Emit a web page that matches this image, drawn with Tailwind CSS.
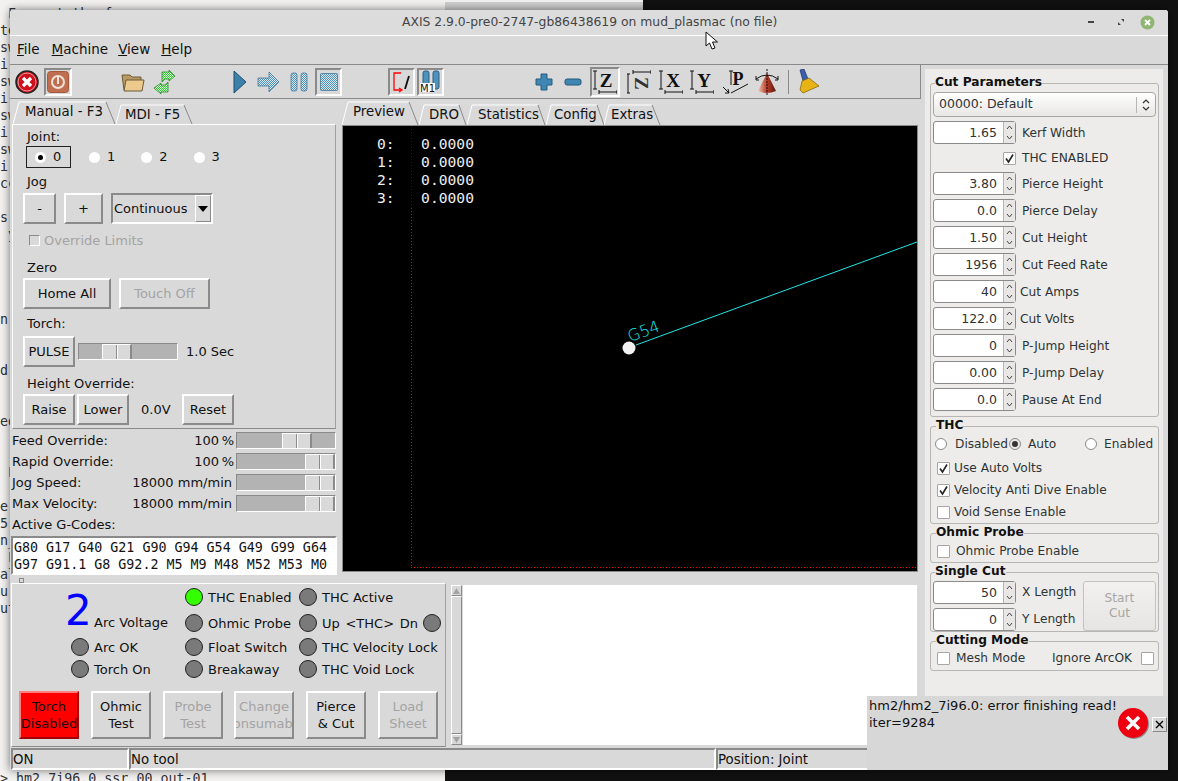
<!DOCTYPE html>
<html lang="en">
<head>
<meta charset="UTF-8">
<title>AXIS</title>
<script src="https://cdn.jsdelivr.net/npm/@tailwindcss/browser@4"></script>
</head>
<body class="bg-[#111111] overflow-hidden font-['DejaVu_Sans',sans-serif] text-[13px] text-[#111111]">
<div class="relative w-[1178px] h-[781px] overflow-hidden">

  <!-- desktop behind the window -->
  <div class="absolute left-0 top-0 w-[643px] h-[10px] bg-[#cfcfcf] border-t-2 border-[#f0f0f0]"></div>
  <pre class="absolute left-0 top-0 w-[445px] h-[781px] pt-[5px] bg-[#f3f2f1] font-['DejaVu_Sans_Mono',monospace] text-[13.33px] leading-[17px] text-[#333333]"> F     t the f
te
sw
ir
sw
ir
sw
ir
sw
ir
cc

s
 y




n


d

 '
ed

 '
 F

er
5
n_
 F
al
ur
ut









> hm2_7i96.0.ssr.00.out-01</pre>

  <!-- AXIS window -->
  <div class="absolute left-[10px] top-[10px] w-[1158px] h-[760px] flex flex-col bg-[#d9d9d9] rounded-t-[3px] shadow-[0_0_10px_rgba(0,0,0,0.55)]">

    <!-- title bar -->
    <div class="relative h-[26px] shrink-0 bg-[#dcdcdc] border-b border-white rounded-t-[3px] flex items-center pl-[392px] text-[#444444] text-[12.35px] font-medium">
      AXIS 2.9.0-pre0-2747-gb86438619 on mud_plasmac (no file)
      <div class="absolute left-[1078px] top-[11px] w-[6px] h-[2px] bg-[#444444]"></div>
      <svg class="absolute left-[1107px] top-[8px]" width="8" height="8" viewBox="0 0 8 8"><path d="M1 7V4L4 7ZM7 1V4L4 1Z" fill="#444444"/></svg>
      <svg class="absolute left-[1130px] top-[5px]" width="15" height="15" viewBox="0 0 15 15"><circle cx="7.5" cy="7.5" r="7" fill="#8fb573"/><path d="M5 5L10 10M10 5L5 10" stroke="white" stroke-width="1.8"/></svg>
    </div>

    <!-- menu -->
    <div class="h-[29px] shrink-0 border-b border-[#8a8a8a] flex items-center pl-[7px] pb-[2px] text-[13.5px]">
      <span><span class="underline">F</span>ile</span>
      <span class="ml-[12px]"><span class="underline">M</span>achine</span>
      <span class="ml-[10px]"><span class="underline">V</span>iew</span>
      <span class="ml-[11px]"><span class="underline">H</span>elp</span>
    </div>

    <div class="flex flex-1 min-h-0">
      <!-- everything left of the cut parameters -->
      <div class="w-[911px] shrink-0 flex flex-col">

        <!-- toolbar -->
        <div class="h-[34px] shrink-0 border-b border-r border-[#8a8a8a] flex items-center">
          <svg class="ml-[5px]" width="24" height="24" viewBox="0 0 24 24"><circle cx="12" cy="12" r="11" fill="#d0101c" stroke="#222222" stroke-width="1.5"/><circle cx="12" cy="12" r="9" fill="none" stroke="#ef9a9a" stroke-width="1"/><path d="M8 8L16 16M16 8L8 16" stroke="white" stroke-width="3.2"/></svg>
          <div class="ml-[5px] w-[28px] h-[28px] border-2 border-t-[#8a8a8a] border-l-[#8a8a8a] border-r-white border-b-white flex items-center justify-center">
            <svg width="22" height="22" viewBox="0 0 22 22"><rect x="0.5" y="0.5" width="21" height="21" rx="3" fill="#bf6f50" stroke="#a55a3d"/><circle cx="11" cy="11" r="6" fill="none" stroke="#f3e2da" stroke-width="2"/><path d="M11 6V13" stroke="#f3e2da" stroke-width="2"/></svg>
          </div>
          <svg class="ml-[49px]" width="24" height="24" viewBox="0 0 24 24"><path d="M1 5H9L11 7H20V20H3Z" fill="#b89a62" stroke="#6d5a3a"/><path d="M3 21L5 10H23L21 21Z" fill="#ecc98d" stroke="#6d5a3a"/></svg>
          <svg class="ml-[8px]" width="24" height="24" viewBox="0 0 24 24"><defs><pattern id="grn" width="2" height="2" patternUnits="userSpaceOnUse"><rect width="2" height="2" fill="#2ecc2e"/><rect width="1" height="1" fill="#d9ffd9"/><rect x="1" y="1" width="1" height="1" fill="#d9ffd9"/></pattern><pattern id="blu" width="2" height="2" patternUnits="userSpaceOnUse"><rect width="2" height="2" fill="#4f93bd"/><rect width="1" height="1" fill="#d8e6ef"/><rect x="1" y="1" width="1" height="1" fill="#d8e6ef"/></pattern></defs><path d="M9 2H16V0L22 6L16 11V9H12L9 12Z" fill="url(#grn)" stroke="#1d7a1d" stroke-width="0.7"/><path d="M15 22H8V24L1 18L8 13V15H12L15 12Z" fill="url(#grn)" stroke="#1d7a1d" stroke-width="0.7"/></svg>
          <svg class="ml-[55px]" width="16" height="24" viewBox="0 0 16 24"><path d="M2 1L14 12L2 23Z" fill="#3b80a9" stroke="#1d4f70"/></svg>
          <svg class="ml-[8px]" width="24" height="24" viewBox="0 0 24 24"><path d="M2 8H13V2L23 12L13 22V16H2Z" fill="url(#blu)" stroke="#3b6f90" stroke-width="0.7"/></svg>
          <svg class="ml-[9px]" width="20" height="20" viewBox="0 0 20 20"><rect x="2" y="1" width="6" height="18" rx="2" fill="url(#blu)" stroke="#3b6f90" stroke-width="0.7"/><rect x="12" y="1" width="6" height="18" rx="2" fill="url(#blu)" stroke="#3b6f90" stroke-width="0.7"/></svg>
          <div class="ml-[6px] w-[27px] h-[28px] border-2 border-t-[#8a8a8a] border-l-[#8a8a8a] border-r-white border-b-white flex items-center justify-center">
            <svg width="18" height="18" viewBox="0 0 18 18"><rect x="0.5" y="0.5" width="17" height="17" rx="1" fill="url(#blu)" stroke="#3b6f90" stroke-width="0.7"/></svg>
          </div>
          <div class="ml-[46px] w-[27px] h-[28px] border-2 border-t-[#8a8a8a] border-l-[#8a8a8a] border-r-white border-b-white flex items-center justify-center">
            <svg width="22" height="22" viewBox="0 0 22 22"><path d="M10 2H3V19H10" fill="none" stroke="#ff0000" stroke-width="1.3"/><path d="M8 17L11 19L8 21" fill="none" stroke="#ff0000" stroke-width="1.3"/><path d="M14 18L18 5" stroke="#111111" stroke-width="1.8"/></svg>
          </div>
          <div class="ml-[2px] w-[27px] h-[28px] border-2 border-t-[#8a8a8a] border-l-[#8a8a8a] border-r-white border-b-white flex items-center justify-center">
            <svg width="23" height="23" viewBox="0 0 23 23"><rect x="4" y="1" width="6" height="18" rx="2" fill="#4f93bd" stroke="#2d5f80"/><rect x="14" y="1" width="6" height="18" rx="2" fill="#4f93bd" stroke="#2d5f80"/><rect x="1" y="13" width="15" height="9" fill="white"/><text x="1" y="21.5" font-family="DejaVu Sans" font-size="10" fill="#111111">M1</text></svg>
          </div>
          <svg class="ml-[91px]" width="18" height="18" viewBox="0 0 18 18"><path d="M6 1H12V6H17V12H12V17H6V12H1V6H6Z" fill="#3f86b2" stroke="#255b7d" stroke-linejoin="round"/></svg>
          <svg class="ml-[11px]" width="18" height="18" viewBox="0 0 18 18"><rect x="1" y="6" width="16" height="6" rx="2" fill="#3f86b2" stroke="#255b7d"/></svg>
          <div class="ml-[8px] w-[30px] h-[30px] border-2 border-t-[#8a8a8a] border-l-[#8a8a8a] border-r-white border-b-white flex items-center justify-center">
            <svg width="24" height="24" viewBox="0 0 24 24"><path d="M2 1V19M6 22H24M6 20V24M24 20V24M0 1H4M0 19H4" stroke="#111111" fill="none"/><text x="13" y="17" text-anchor="middle" font-family="Liberation Serif" font-weight="bold" font-size="19" fill="#111111">Z</text></svg>
          </div>
          <svg class="ml-[7px]" width="24" height="26" viewBox="0 0 24 26"><path d="M1 5V24M0 5H3M0 24H3M6 3H24M6 1V5M24 1V5" stroke="#111111" fill="none"/><text transform="translate(8 8) rotate(90)" font-family="Liberation Serif" font-weight="bold" font-size="19" fill="#333333">Z</text></svg>
          <svg class="ml-[8px]" width="24" height="24" viewBox="0 0 24 24"><path d="M2 1V19M0 1H4M0 19H4M6 22H24M6 20V24M24 20V24" stroke="#111111" fill="none"/><text x="14" y="17" text-anchor="middle" font-family="Liberation Serif" font-weight="bold" font-size="19" fill="#111111">X</text></svg>
          <svg class="ml-[7px]" width="24" height="24" viewBox="0 0 24 24"><path d="M2 1V19M0 1H4M0 19H4M6 22H24M6 20V24M24 20V24" stroke="#111111" fill="none"/><text x="14" y="17" text-anchor="middle" font-family="Liberation Serif" font-weight="bold" font-size="19" fill="#111111">Y</text></svg>
          <svg class="ml-[9px]" width="26" height="26" viewBox="0 0 26 26"><path d="M8 2V16M6 2H10M0 18L6 24M5 20L6 24L2 24M8 24L25 15" stroke="#111111" fill="none"/><text x="15" y="16" text-anchor="middle" font-family="Liberation Serif" font-weight="bold" font-size="18" fill="#111111">P</text></svg>
          <svg class="ml-[6px]" width="24" height="26" viewBox="0 0 24 26"><defs><linearGradient id="cone" x1="0" x2="1" y1="0" y2="0"><stop offset="0" stop-color="#f4c4b4"/><stop offset="0.5" stop-color="#b53a26"/><stop offset="1" stop-color="#5a1d12"/></linearGradient></defs><path d="M12 4L21 22Q12 26 3 22Z" fill="url(#cone)"/><path d="M12 0V26" stroke="#111111" stroke-dasharray="2 1"/><path d="M1 10Q12 2 23 10M1 7V11H4M23 7V11H20" stroke="#111111" fill="none"/></svg>
          <div class="ml-[9px] w-[1px] h-[24px] bg-[#8a8a8a]"></div>
          <svg class="ml-[9px]" width="22" height="26" viewBox="0 0 22 26"><path d="M2 1L6 0L10 10L5 12Z" fill="#3a5fb0" stroke="#1d2f66" stroke-width="0.7"/><path d="M4 12L11 9L21 17L5 24L2 21Z" fill="#e8b315" stroke="#7d5f08" stroke-width="0.7"/></svg>
        </div>

        <!-- controls and preview -->
        <div class="flex h-[482px] shrink-0">
          <div class="w-[330px] shrink-0">
            <!-- left notebook tabs -->
            <div class="flex h-[25px] pl-[3px] items-end text-[13.33px]">
              <div class="relative w-[103px] h-[23px] pl-[12px] leading-[22px] shrink-0">
                <svg class="absolute inset-0" width="103" height="23" viewBox="0 0 103 23"><path d="M0 23L6 1H93" fill="none" stroke="white"/><path d="M93 1L102 23" fill="none" stroke="#8a8a8a"/></svg>
                Manual - F3
              </div>
              <div class="relative w-[80px] h-[20px] pl-[9px] leading-[21px] shrink-0">
                <svg class="absolute inset-0" width="80" height="20" viewBox="0 0 80 20"><path d="M0 20L5 1H68" fill="none" stroke="white"/><path d="M68 1L76 20" fill="none" stroke="#8a8a8a"/></svg>
                MDI - F5
              </div>
            </div>
            <!-- manual panel -->
            <div class="ml-[2px] w-[324px] h-[305px] border border-t-white border-l-white border-r-[#a0a0a0] border-b-[#8a8a8a] px-[10px]">
              <div class="mt-[2px] ml-[4px] h-[18px] leading-[20px]">Joint:</div>
              <div class="mt-[1px] ml-[3px] flex items-center h-[22px]">
                <div class="w-[45px] h-[22px] border border-[#222222] flex items-center pl-[8px] shrink-0">
                  <div class="w-[11px] h-[11px] rounded-full bg-white flex items-center justify-center"><div class="w-[5px] h-[5px] rounded-full bg-black"></div></div>
                  <span class="ml-[7px]">0</span>
                </div>
                <div class="ml-[18px] w-[11px] h-[11px] rounded-full bg-white"></div><span class="ml-[7px]">1</span>
                <div class="ml-[26px] w-[11px] h-[11px] rounded-full bg-white"></div><span class="ml-[7px]">2</span>
                <div class="ml-[26px] w-[11px] h-[11px] rounded-full bg-white"></div><span class="ml-[7px]">3</span>
              </div>
              <div class="mt-[5px] ml-[4px] h-[18px] leading-[18px]">Jog</div>
              <div class="mt-[2px] flex h-[31px]">
                <div class="w-[33px] border-2 border-t-white border-l-white border-r-[#8a8a8a] border-b-[#8a8a8a] flex items-center justify-center">-</div>
                <div class="ml-[8px] w-[39px] border-2 border-t-white border-l-white border-r-[#8a8a8a] border-b-[#8a8a8a] flex items-center justify-center">+</div>
                <div class="ml-[8px] w-[102px] border-2 border-t-[#8a8a8a] border-l-[#8a8a8a] border-r-white border-b-white flex items-center pl-[1px]">
                  <span class="flex-1">Continuous</span>
                  <div class="w-[16px] h-full border border-t-white border-l-white border-r-[#8a8a8a] border-b-[#8a8a8a] flex items-center justify-center"><svg width="10" height="6" viewBox="0 0 10 6"><path d="M0 0H10L5 6Z" fill="#000000"/></svg></div>
                </div>
              </div>
              <div class="mt-[7px] ml-[6px] flex items-center h-[18px] text-[#a3a3a3]">
                <div class="w-[11px] h-[11px] border border-t-[#8a8a8a] border-l-[#8a8a8a] border-r-white border-b-white"></div>
                <span class="ml-[4px] mt-[1px]">Override Limits</span>
              </div>
              <div class="mt-[9px] ml-[4px] h-[18px] leading-[20px]">Zero</div>
              <div class="mt-[2px] flex h-[31px]">
                <div class="w-[88px] border-2 border-t-white border-l-white border-r-[#8a8a8a] border-b-[#8a8a8a] flex items-center justify-center">Home All</div>
                <div class="ml-[8px] w-[91px] border-2 border-t-white border-l-white border-r-[#8a8a8a] border-b-[#8a8a8a] flex items-center justify-center text-[#a3a3a3]">Touch Off</div>
              </div>
              <div class="mt-[5px] ml-[4px] h-[18px] leading-[20px]">Torch:</div>
              <div class="mt-[4px] flex items-center h-[31px]">
                <div class="w-[52px] h-[31px] border-2 border-t-white border-l-white border-r-[#8a8a8a] border-b-[#8a8a8a] flex items-center justify-center">PULSE</div>
                <div class="ml-[3px] w-[100px] h-[17px] bg-[#b3b3b3] border-t border-l border-t-[#8a8a8a] border-l-[#8a8a8a] border-b border-r border-b-white border-r-white flex">
                  <div class="ml-[23px] w-[30px] h-full bg-[#d9d9d9] border-t border-l border-white border-r-2 border-r-[#8a8a8a] flex"><div class="w-[14px] border-r border-r-[#8a8a8a]"></div><div class="w-[1px] bg-white"></div></div>
                </div>
                <span class="ml-[8px]">1.0 Sec</span>
              </div>
              <div class="mt-[7px] ml-[4px] h-[18px] leading-[20px]">Height Override:</div>
              <div class="mt-[2px] flex items-center h-[31px]">
                <div class="w-[52px] h-[31px] border-2 border-t-white border-l-white border-r-[#8a8a8a] border-b-[#8a8a8a] flex items-center justify-center">Raise</div>
                <div class="ml-[2px] w-[52px] h-[31px] border-2 border-t-white border-l-white border-r-[#8a8a8a] border-b-[#8a8a8a] flex items-center justify-center">Lower</div>
                <span class="ml-[12px] w-[41px]">0.0V</span>
                <div class="w-[52px] h-[31px] border-2 border-t-white border-l-white border-r-[#8a8a8a] border-b-[#8a8a8a] flex items-center justify-center">Reset</div>
              </div>
            </div>
            <!-- override sliders -->
            <div class="mt-[1px] pl-[2px]">
              <div class="flex items-center h-[21px]">
                <div class="w-[222px] flex justify-between"><span>Feed Override:</span><span>100&thinsp;%</span></div>
                <div class="ml-[2px] w-[100px] h-[17px] bg-[#b3b3b3] border-t border-l border-t-[#8a8a8a] border-l-[#8a8a8a] border-b border-r border-b-white border-r-white flex">
                  <div class="ml-[45px] w-[30px] h-full bg-[#d9d9d9] border-t border-l border-white border-r-2 border-r-[#8a8a8a] flex"><div class="w-[14px] border-r border-r-[#8a8a8a]"></div><div class="w-[1px] bg-white"></div></div>
                </div>
              </div>
              <div class="flex items-center h-[21px]">
                <div class="w-[222px] flex justify-between"><span>Rapid Override:</span><span>100&thinsp;%</span></div>
                <div class="ml-[2px] w-[100px] h-[17px] bg-[#b3b3b3] border-t border-l border-t-[#8a8a8a] border-l-[#8a8a8a] border-b border-r border-b-white border-r-white flex">
                  <div class="ml-[68px] w-[30px] h-full bg-[#d9d9d9] border-t border-l border-white border-r-2 border-r-[#8a8a8a] flex"><div class="w-[14px] border-r border-r-[#8a8a8a]"></div><div class="w-[1px] bg-white"></div></div>
                </div>
              </div>
              <div class="flex items-center h-[21px]">
                <div class="w-[220px] mr-[2px] flex justify-between"><span>Jog Speed:</span><span>18000 mm/min</span></div>
                <div class="ml-[2px] w-[100px] h-[17px] bg-[#b3b3b3] border-t border-l border-t-[#8a8a8a] border-l-[#8a8a8a] border-b border-r border-b-white border-r-white flex">
                  <div class="ml-[68px] w-[30px] h-full bg-[#d9d9d9] border-t border-l border-white border-r-2 border-r-[#8a8a8a] flex"><div class="w-[14px] border-r border-r-[#8a8a8a]"></div><div class="w-[1px] bg-white"></div></div>
                </div>
              </div>
              <div class="flex items-center h-[21px]">
                <div class="w-[220px] mr-[2px] flex justify-between"><span>Max Velocity:</span><span>18000 mm/min</span></div>
                <div class="ml-[2px] w-[100px] h-[17px] bg-[#b3b3b3] border-t border-l border-t-[#8a8a8a] border-l-[#8a8a8a] border-b border-r border-b-white border-r-white flex">
                  <div class="ml-[68px] w-[30px] h-full bg-[#d9d9d9] border-t border-l border-white border-r-2 border-r-[#8a8a8a] flex"><div class="w-[14px] border-r border-r-[#8a8a8a]"></div><div class="w-[1px] bg-white"></div></div>
                </div>
              </div>
              <div class="flex items-center h-[21px]">Active G-Codes:</div>
            </div>
            <div class="mt-[1px] ml-[1px] w-[326px] h-[39px] bg-white border-2 border-t-[#8a8a8a] border-l-[#8a8a8a] border-r-white border-b-white pl-[1px] pt-[1px] font-['DejaVu_Sans_Mono',monospace] text-[13.33px] leading-[17px] whitespace-pre overflow-hidden">G80 G17 G40 G21 G90 G94 G54 G49 G99 G64
G97 G91.1 G8 G92.2 M5 M9 M48 M52 M53 M0</div>
          </div>

          <!-- preview notebook -->
          <div class="flex-1 min-w-0">
            <div class="flex h-[26px] pl-[2px] items-end text-[13.33px]">
              <div class="relative w-[77px] h-[24px] pl-[11px] leading-[22px] shrink-0">
                <svg class="absolute inset-0" width="77" height="24" viewBox="0 0 77 24"><path d="M0 24L6 1H67" fill="none" stroke="white"/><path d="M67 1L76 24" fill="none" stroke="#8a8a8a"/></svg>
                Preview
              </div>
              <div class="relative w-[48px] h-[21px] pl-[10px] leading-[21px] shrink-0">
                <svg class="absolute inset-0" width="48" height="21" viewBox="0 0 48 21"><path d="M0 21L5 1H40" fill="none" stroke="white"/><path d="M40 1L47 21" fill="none" stroke="#8a8a8a"/></svg>
                DRO
              </div>
              <div class="relative w-[79px] h-[21px] pl-[11px] leading-[21px] shrink-0">
                <svg class="absolute inset-0" width="79" height="21" viewBox="0 0 79 21"><path d="M0 21L5 1H71" fill="none" stroke="white"/><path d="M71 1L78 21" fill="none" stroke="#8a8a8a"/></svg>
                Statistics
              </div>
              <div class="relative w-[58px] h-[21px] pl-[8px] leading-[21px] shrink-0">
                <svg class="absolute inset-0" width="58" height="21" viewBox="0 0 58 21"><path d="M0 21L5 1H51" fill="none" stroke="white"/><path d="M51 1L58 21" fill="none" stroke="#8a8a8a"/></svg>
                Config
              </div>
              <div class="relative w-[57px] h-[21px] pl-[7px] leading-[21px] shrink-0">
                <svg class="absolute inset-0" width="57" height="21" viewBox="0 0 57 21"><path d="M0 21L5 1H48" fill="none" stroke="white"/><path d="M48 1L56 21" fill="none" stroke="#8a8a8a"/></svg>
                Extras
              </div>
            </div>
            <div class="relative ml-[2px] w-[576px] h-[447px] bg-black border border-[#8a8a8a] overflow-hidden">
              <pre class="absolute left-[34px] top-[9px] font-['DejaVu_Sans_Mono',monospace] text-[14.65px] leading-[18px] text-[#eeeeee]">0:   0.0000
1:   0.0000
2:   0.0000
3:   0.0000</pre>
              <svg class="absolute inset-0" width="574" height="445" viewBox="343 126 574 445" shape-rendering="crispEdges">
                <path d="M411.5 126V208" stroke="#5a0000" stroke-dasharray="1 2"/>
                <path d="M411.5 208V567.5" stroke="#ff0000" stroke-dasharray="1 2"/>
                <path d="M411 567.5H917" stroke="#ff0000" stroke-dasharray="1 2"/>
                <path d="M636 345L917 242" stroke="#22e6e6" shape-rendering="auto"/>
                <circle cx="629" cy="348" r="6.5" fill="#f2f2f2" shape-rendering="auto"/>
                <text transform="translate(630 342) rotate(-20)" font-family="DejaVu Sans" font-weight="200" font-size="16" fill="#22e6e6">G54</text>
              </svg>
            </div>
          </div>
        </div>

        <!-- plasma panel and text -->
        <div class="relative flex h-[167px] shrink-0">
          <div class="absolute left-[9px] top-[-3px] w-[5px] h-[5px] bg-[#d9d9d9] border border-[#8a8a8a]"></div>
          <div class="mt-[2px] ml-[1px] w-[435px] h-[164px] shrink-0 border border-t-white border-l-white border-r-[#a0a0a0] border-b-[#8a8a8a]">
            <div class="ml-[59px] grid grid-cols-[114px_114px_1fr] grid-rows-[26px_26px_22px_22px] items-center whitespace-nowrap">
              <div class="row-span-2 self-end flex items-end h-[52px]">
                <span class="ml-[-6px] w-[29px] text-[#0000ff] text-[42px] leading-[50px]">2</span>
                <span class="leading-[18px] mb-[4px]">Arc Voltage</span>
              </div>
              <div class="flex items-center gap-[5px]"><div class="w-[18px] h-[18px] rounded-full border border-[#222222] bg-[#33ff00]"></div><span class="mt-[1px]">THC Enabled</span></div>
              <div class="flex items-center gap-[5px]"><div class="w-[18px] h-[18px] rounded-full border border-[#222222] bg-[#7a7a7a]"></div><span class="mt-[1px]">THC Active</span></div>
              <div class="flex items-center gap-[5px]"><div class="w-[18px] h-[18px] rounded-full border border-[#222222] bg-[#7a7a7a]"></div><span class="mt-[1px]">Ohmic Probe</span></div>
              <div class="flex items-center gap-[5px]"><div class="w-[18px] h-[18px] rounded-full border border-[#222222] bg-[#7a7a7a]"></div>
                <div class="w-[96px] mt-[1px] flex justify-between"><span>Up</span><span>&lt;THC&gt;</span><span>Dn</span></div>
                <div class="w-[18px] h-[18px] rounded-full border border-[#222222] bg-[#7a7a7a]"></div>
              </div>
              <div class="flex items-center gap-[5px]"><div class="w-[18px] h-[18px] rounded-full border border-[#222222] bg-[#7a7a7a]"></div><span class="mt-[1px]">Arc OK</span></div>
              <div class="flex items-center gap-[5px]"><div class="w-[18px] h-[18px] rounded-full border border-[#222222] bg-[#7a7a7a]"></div><span class="mt-[1px]">Float Switch</span></div>
              <div class="flex items-center gap-[5px]"><div class="w-[18px] h-[18px] rounded-full border border-[#222222] bg-[#7a7a7a]"></div><span class="mt-[1px]">THC Velocity Lock</span></div>
              <div class="flex items-center gap-[5px]"><div class="w-[18px] h-[18px] rounded-full border border-[#222222] bg-[#7a7a7a]"></div><span class="mt-[1px]">Torch On</span></div>
              <div class="flex items-center gap-[5px]"><div class="w-[18px] h-[18px] rounded-full border border-[#222222] bg-[#7a7a7a]"></div><span class="mt-[1px]">Breakaway</span></div>
              <div class="flex items-center gap-[5px]"><div class="w-[18px] h-[18px] rounded-full border border-[#222222] bg-[#7a7a7a]"></div><span class="mt-[1px]">THC Void Lock</span></div>
            </div>
            <div class="mt-[11px] ml-[7px] flex gap-[12px] leading-[17px] text-center">
              <div class="w-[60px] h-[48px] overflow-hidden whitespace-nowrap border-2 border-t-[#ff8080] border-l-[#ff8080] border-r-[#a00000] border-b-[#a00000] bg-[#ff0000] flex flex-col items-center justify-center"><span>Torch</span><span>Disabled</span></div>
              <div class="w-[60px] h-[48px] overflow-hidden whitespace-nowrap border-2 border-t-white border-l-white border-r-[#8a8a8a] border-b-[#8a8a8a] flex flex-col items-center justify-center"><span>Ohmic</span><span>Test</span></div>
              <div class="w-[60px] h-[48px] overflow-hidden whitespace-nowrap border-2 border-t-white border-l-white border-r-[#8a8a8a] border-b-[#8a8a8a] flex flex-col items-center justify-center text-[#a3a3a3]"><span>Probe</span><span>Test</span></div>
              <div class="ml-[-1px] w-[60px] h-[48px] overflow-hidden whitespace-nowrap border-2 border-t-white border-l-white border-r-[#8a8a8a] border-b-[#8a8a8a] flex flex-col items-center justify-center text-[#a3a3a3]"><span>Change</span><span>Consumable</span></div>
              <div class="w-[60px] h-[48px] overflow-hidden whitespace-nowrap border-2 border-t-white border-l-white border-r-[#8a8a8a] border-b-[#8a8a8a] flex flex-col items-center justify-center"><span>Pierce</span><span>&amp; Cut</span></div>
              <div class="w-[60px] h-[48px] overflow-hidden whitespace-nowrap border-2 border-t-white border-l-white border-r-[#8a8a8a] border-b-[#8a8a8a] flex flex-col items-center justify-center text-[#a3a3a3]"><span>Load</span><span>Sheet</span></div>
            </div>
          </div>
          <!-- scrollbar -->
          <div class="mt-[4px] ml-[5px] w-[11px] h-[160px] shrink-0 bg-[#b3b3b3] flex flex-col">
            <div class="h-[11px] bg-[#d9d9d9] border border-t-white border-l-white border-r-[#8a8a8a] border-b-[#8a8a8a] flex items-center justify-center"><svg width="7" height="6" viewBox="0 0 7 6"><path d="M3.5 0L7 6H0Z" fill="#a3a3a3"/></svg></div>
            <div class="flex-1 bg-[#d9d9d9] border border-t-white border-l-white border-r-[#8a8a8a] border-b-[#8a8a8a]"></div>
            <div class="h-[11px] bg-[#d9d9d9] border border-t-white border-l-white border-r-[#8a8a8a] border-b-[#8a8a8a] flex items-center justify-center"><svg width="7" height="6" viewBox="0 0 7 6"><path d="M0 0H7L3.5 6Z" fill="#a3a3a3"/></svg></div>
          </div>
          <div class="mt-[4px] ml-[1px] w-[454px] h-[160px] bg-white"></div>
        </div>

        <!-- status bar -->
        <div class="flex h-[22px] shrink-0 pl-[1px] text-[13.33px]">
          <div class="w-[118px] border-2 border-t-[#8a8a8a] border-l-[#8a8a8a] border-r-white border-b-white leading-[20px] overflow-hidden">ON</div>
          <div class="w-[587px] border-2 border-t-[#8a8a8a] border-l-[#8a8a8a] border-r-white border-b-white leading-[20px] overflow-hidden">No tool</div>
          <div class="flex-1 border-2 border-t-[#8a8a8a] border-l-[#8a8a8a] border-r-white border-b-white leading-[20px] overflow-hidden">Position: Joint</div>
        </div>
      </div>

      <!-- cut parameters -->
      <div class="flex-1 pt-[4px] pl-[4px]">
        <div class="w-[238px] h-[627px] bg-[#edecea] pt-[14px] pl-[5px] text-[12.2px] text-[#2e3436]">

          <div class="w-[229px] h-[334px] border border-[#b8b6b2] rounded-[3px] px-[2px]">
            <div class="mt-[-9px] ml-[2px] h-[14px] w-fit leading-[14px] text-[12.2px] font-bold text-[#111111] bg-[#edecea]">Cut Parameters</div>
            <div class="mt-[3px] h-[25px] w-[223px] border border-[#a8a6a2] rounded-[4px] bg-gradient-to-b from-white to-[#e8e7e5] flex items-center pl-[5px] text-[12.5px]">
              <span class="flex-1">00000: Default</span>
              <div class="w-[1px] h-[16px] bg-[#b8b6b2]"></div>
              <svg class="mx-[5px]" width="8" height="12" viewBox="0 0 8 12"><path d="M1 4L4 1L7 4M1 8L4 11L7 8" fill="none" stroke="#333333" stroke-width="1.2"/></svg>
            </div>
            <div class="mt-[4px] flex items-center h-[23px]">
              <div class="w-[83px] h-[23px] border border-[#8a8a8a] rounded-[3px] bg-white flex"><span class="flex-1 text-right pr-[6px] leading-[21px] text-[12.5px]">1.65</span><div class="w-[12px] border-l border-[#b8b6b2] bg-[#e8e7e5] flex flex-col items-center justify-around"><svg width="7" height="5" viewBox="0 0 7 5"><path d="M1 4L3.5 1L6 4" fill="none" stroke="#444444"/></svg><svg width="7" height="5" viewBox="0 0 7 5"><path d="M1 1L3.5 4L6 1" fill="none" stroke="#444444"/></svg></div></div>
              <span class="ml-[6px] mt-[1px]">Kerf Width</span>
            </div>
            <div class="h-[24px] mt-[2px] flex items-center pl-[70px]">
              <div class="w-[13px] h-[13px] bg-white border border-[#a8a6a2] rounded-[1px] flex items-center justify-center"><svg width="11" height="11" viewBox="0 0 11 11"><path d="M2 5.5L4.5 9L9 1.5" fill="none" stroke="#222222" stroke-width="1.6"/></svg></div>
              <span class="ml-[6px]">THC ENABLED</span>
            </div>
            <div class="mt-[2px] flex items-center h-[23px]">
              <div class="w-[83px] h-[23px] border border-[#8a8a8a] rounded-[3px] bg-white flex"><span class="flex-1 text-right pr-[6px] leading-[21px] text-[12.5px]">3.80</span><div class="w-[12px] border-l border-[#b8b6b2] bg-[#e8e7e5] flex flex-col items-center justify-around"><svg width="7" height="5" viewBox="0 0 7 5"><path d="M1 4L3.5 1L6 4" fill="none" stroke="#444444"/></svg><svg width="7" height="5" viewBox="0 0 7 5"><path d="M1 1L3.5 4L6 1" fill="none" stroke="#444444"/></svg></div></div>
              <span class="ml-[6px] mt-[1px]">Pierce Height</span>
            </div>
            <div class="mt-[4px] flex items-center h-[23px]">
              <div class="w-[83px] h-[23px] border border-[#8a8a8a] rounded-[3px] bg-white flex"><span class="flex-1 text-right pr-[6px] leading-[21px] text-[12.5px]">0.0</span><div class="w-[12px] border-l border-[#b8b6b2] bg-[#e8e7e5] flex flex-col items-center justify-around"><svg width="7" height="5" viewBox="0 0 7 5"><path d="M1 4L3.5 1L6 4" fill="none" stroke="#444444"/></svg><svg width="7" height="5" viewBox="0 0 7 5"><path d="M1 1L3.5 4L6 1" fill="none" stroke="#444444"/></svg></div></div>
              <span class="ml-[6px] mt-[1px]">Pierce Delay</span>
            </div>
            <div class="mt-[4px] flex items-center h-[23px]">
              <div class="w-[83px] h-[23px] border border-[#8a8a8a] rounded-[3px] bg-white flex"><span class="flex-1 text-right pr-[6px] leading-[21px] text-[12.5px]">1.50</span><div class="w-[12px] border-l border-[#b8b6b2] bg-[#e8e7e5] flex flex-col items-center justify-around"><svg width="7" height="5" viewBox="0 0 7 5"><path d="M1 4L3.5 1L6 4" fill="none" stroke="#444444"/></svg><svg width="7" height="5" viewBox="0 0 7 5"><path d="M1 1L3.5 4L6 1" fill="none" stroke="#444444"/></svg></div></div>
              <span class="ml-[6px] mt-[1px]">Cut Height</span>
            </div>
            <div class="mt-[4px] flex items-center h-[23px]">
              <div class="w-[83px] h-[23px] border border-[#8a8a8a] rounded-[3px] bg-white flex"><span class="flex-1 text-right pr-[6px] leading-[21px] text-[12.5px]">1956</span><div class="w-[12px] border-l border-[#b8b6b2] bg-[#e8e7e5] flex flex-col items-center justify-around"><svg width="7" height="5" viewBox="0 0 7 5"><path d="M1 4L3.5 1L6 4" fill="none" stroke="#444444"/></svg><svg width="7" height="5" viewBox="0 0 7 5"><path d="M1 1L3.5 4L6 1" fill="none" stroke="#444444"/></svg></div></div>
              <span class="ml-[6px] mt-[1px]">Cut Feed Rate</span>
            </div>
            <div class="mt-[4px] flex items-center h-[23px]">
              <div class="w-[83px] h-[23px] border border-[#8a8a8a] rounded-[3px] bg-white flex"><span class="flex-1 text-right pr-[6px] leading-[21px] text-[12.5px]">40</span><div class="w-[12px] border-l border-[#b8b6b2] bg-[#e8e7e5] flex flex-col items-center justify-around"><svg width="7" height="5" viewBox="0 0 7 5"><path d="M1 4L3.5 1L6 4" fill="none" stroke="#444444"/></svg><svg width="7" height="5" viewBox="0 0 7 5"><path d="M1 1L3.5 4L6 1" fill="none" stroke="#444444"/></svg></div></div>
              <span class="ml-[4px] mt-[1px]">Cut Amps</span>
            </div>
            <div class="mt-[4px] flex items-center h-[23px]">
              <div class="w-[83px] h-[23px] border border-[#8a8a8a] rounded-[3px] bg-white flex"><span class="flex-1 text-right pr-[6px] leading-[21px] text-[12.5px]">122.0</span><div class="w-[12px] border-l border-[#b8b6b2] bg-[#e8e7e5] flex flex-col items-center justify-around"><svg width="7" height="5" viewBox="0 0 7 5"><path d="M1 4L3.5 1L6 4" fill="none" stroke="#444444"/></svg><svg width="7" height="5" viewBox="0 0 7 5"><path d="M1 1L3.5 4L6 1" fill="none" stroke="#444444"/></svg></div></div>
              <span class="ml-[4px] mt-[1px]">Cut Volts</span>
            </div>
            <div class="mt-[4px] flex items-center h-[23px]">
              <div class="w-[83px] h-[23px] border border-[#8a8a8a] rounded-[3px] bg-white flex"><span class="flex-1 text-right pr-[6px] leading-[21px] text-[12.5px]">0</span><div class="w-[12px] border-l border-[#b8b6b2] bg-[#e8e7e5] flex flex-col items-center justify-around"><svg width="7" height="5" viewBox="0 0 7 5"><path d="M1 4L3.5 1L6 4" fill="none" stroke="#444444"/></svg><svg width="7" height="5" viewBox="0 0 7 5"><path d="M1 1L3.5 4L6 1" fill="none" stroke="#444444"/></svg></div></div>
              <span class="ml-[6px] mt-[1px]">P-Jump Height</span>
            </div>
            <div class="mt-[4px] flex items-center h-[23px]">
              <div class="w-[83px] h-[23px] border border-[#8a8a8a] rounded-[3px] bg-white flex"><span class="flex-1 text-right pr-[6px] leading-[21px] text-[12.5px]">0.00</span><div class="w-[12px] border-l border-[#b8b6b2] bg-[#e8e7e5] flex flex-col items-center justify-around"><svg width="7" height="5" viewBox="0 0 7 5"><path d="M1 4L3.5 1L6 4" fill="none" stroke="#444444"/></svg><svg width="7" height="5" viewBox="0 0 7 5"><path d="M1 1L3.5 4L6 1" fill="none" stroke="#444444"/></svg></div></div>
              <span class="ml-[6px] mt-[1px]">P-Jump Delay</span>
            </div>
            <div class="mt-[4px] flex items-center h-[23px]">
              <div class="w-[83px] h-[23px] border border-[#8a8a8a] rounded-[3px] bg-white flex"><span class="flex-1 text-right pr-[6px] leading-[21px] text-[12.5px]">0.0</span><div class="w-[12px] border-l border-[#b8b6b2] bg-[#e8e7e5] flex flex-col items-center justify-around"><svg width="7" height="5" viewBox="0 0 7 5"><path d="M1 4L3.5 1L6 4" fill="none" stroke="#444444"/></svg><svg width="7" height="5" viewBox="0 0 7 5"><path d="M1 1L3.5 4L6 1" fill="none" stroke="#444444"/></svg></div></div>
              <span class="ml-[6px] mt-[1px]">Pause At End</span>
            </div>
          </div>

          <div class="mt-[9px] w-[229px] h-[98px] border border-[#b8b6b2] rounded-[3px] px-[4px]">
            <div class="mt-[-9px] ml-[1px] h-[14px] w-fit leading-[14px] text-[12.2px] font-bold text-[#111111] bg-[#edecea]">THC</div>
            <div class="mt-[3px] h-[18px] flex items-center">
              <div class="w-[12px] h-[12px] rounded-full border border-[#8a8a8a] bg-white"></div>
              <span class="ml-[8px] w-[54px]">Disabled</span>
              <div class="w-[12px] h-[12px] rounded-full border border-[#8a8a8a] bg-[#e8e7e5] flex items-center justify-center"><div class="w-[6px] h-[6px] rounded-full bg-[#333333]"></div></div>
              <span class="ml-[7px] w-[57px]">Auto</span>
              <div class="w-[12px] h-[12px] rounded-full border border-[#8a8a8a] bg-white"></div>
              <span class="ml-[7px]">Enabled</span>
            </div>
            <div class="mt-[4px] h-[22px] flex items-center pl-[2px]">
              <div class="w-[13px] h-[13px] bg-white border border-[#a8a6a2] rounded-[1px] flex items-center justify-center"><svg width="11" height="11" viewBox="0 0 11 11"><path d="M2 5.5L4.5 9L9 1.5" fill="none" stroke="#222222" stroke-width="1.6"/></svg></div>
              <span class="ml-[4px]">Use Auto Volts</span>
            </div>
            <div class="h-[22px] flex items-center pl-[2px]">
              <div class="w-[13px] h-[13px] bg-white border border-[#a8a6a2] rounded-[1px] flex items-center justify-center"><svg width="11" height="11" viewBox="0 0 11 11"><path d="M2 5.5L4.5 9L9 1.5" fill="none" stroke="#222222" stroke-width="1.6"/></svg></div>
              <span class="ml-[4px]">Velocity Anti Dive Enable</span>
            </div>
            <div class="h-[22px] flex items-center pl-[2px]">
              <div class="w-[13px] h-[13px] bg-white border border-[#a8a6a2] rounded-[1px]"></div>
              <span class="ml-[4px]">Void Sense Enable</span>
            </div>
          </div>

          <div class="mt-[9px] w-[229px] h-[30px] border border-[#b8b6b2] rounded-[3px] px-[4px]">
            <div class="mt-[-9px] ml-[1px] h-[14px] w-fit leading-[14px] text-[12.2px] font-bold text-[#111111] bg-[#edecea]">Ohmic Probe</div>
            <div class="mt-[3px] h-[18px] flex items-center pl-[2px]">
              <div class="w-[13px] h-[13px] bg-white border border-[#a8a6a2] rounded-[1px]"></div>
              <span class="ml-[6px]">Ohmic Probe Enable</span>
            </div>
          </div>

          <div class="mt-[9px] w-[229px] h-[60px] border border-[#b8b6b2] rounded-[3px] px-[2px]">
            <div class="mt-[-9px] ml-[2px] h-[14px] w-fit leading-[14px] text-[12.2px] font-bold text-[#111111] bg-[#edecea]">Single Cut</div>
            <div class="flex mt-[3px]">
              <div class="w-[150px]">
                <div class="flex items-center h-[23px]">
                  <div class="w-[83px] h-[23px] border border-[#8a8a8a] rounded-[3px] bg-white flex"><span class="flex-1 text-right pr-[6px] leading-[21px] text-[12.5px]">50</span><div class="w-[12px] border-l border-[#b8b6b2] bg-[#e8e7e5] flex flex-col items-center justify-around"><svg width="7" height="5" viewBox="0 0 7 5"><path d="M1 4L3.5 1L6 4" fill="none" stroke="#444444"/></svg><svg width="7" height="5" viewBox="0 0 7 5"><path d="M1 1L3.5 4L6 1" fill="none" stroke="#444444"/></svg></div></div>
                  <span class="ml-[6px]">X Length</span>
                </div>
                <div class="mt-[4px] flex items-center h-[23px]">
                  <div class="w-[83px] h-[23px] border border-[#8a8a8a] rounded-[3px] bg-white flex"><span class="flex-1 text-right pr-[6px] leading-[21px] text-[12.5px]">0</span><div class="w-[12px] border-l border-[#b8b6b2] bg-[#e8e7e5] flex flex-col items-center justify-around"><svg width="7" height="5" viewBox="0 0 7 5"><path d="M1 4L3.5 1L6 4" fill="none" stroke="#444444"/></svg><svg width="7" height="5" viewBox="0 0 7 5"><path d="M1 1L3.5 4L6 1" fill="none" stroke="#444444"/></svg></div></div>
                  <span class="ml-[6px]">Y Length</span>
                </div>
              </div>
              <div class="w-[73px] h-[50px] border border-[#c4c2be] rounded-[3px] bg-gradient-to-b from-[#f2f1ef] to-[#e6e5e3] flex flex-col items-center justify-center leading-[15px] text-[#a8a6a2]"><span>Start</span><span>Cut</span></div>
            </div>
          </div>

          <div class="mt-[9px] w-[229px] h-[30px] border border-[#b8b6b2] rounded-[3px] px-[4px]">
            <div class="mt-[-9px] ml-[1px] h-[14px] w-fit leading-[14px] text-[12.2px] font-bold text-[#111111] bg-[#edecea]">Cutting Mode</div>
            <div class="mt-[2px] h-[18px] flex items-center pl-[2px]">
              <div class="w-[13px] h-[13px] bg-white border border-[#a8a6a2] rounded-[1px]"></div>
              <span class="ml-[6px] flex-1">Mesh Mode</span>
              <span>Ignore ArcOK</span>
              <div class="ml-[9px] w-[13px] h-[13px] bg-white border border-[#a8a6a2] rounded-[1px]"></div>
            </div>
          </div>
        </div>
      </div>
    </div>

    <!-- error notification -->
    <div class="absolute left-[857px] top-[686px] w-[301px] h-[74px] bg-[#d7d7d7] pl-[2px] pt-[1px] leading-[17px] text-[13px]">
      <div>hm2/hm2_7i96.0: error finishing read!</div>
      <div>iter=9284</div>
      <svg class="absolute left-[250px] top-[11px]" width="32" height="32" viewBox="0 0 32 32"><circle cx="17" cy="17" r="15" fill="#8a8a8a"/><circle cx="16" cy="16" r="15" fill="#ee0011"/><path d="M10 10L22 22M22 10L10 22" stroke="white" stroke-width="3.6"/></svg>
      <div class="absolute left-[285px] top-[21px] w-[15px] h-[15px] border border-t-white border-l-white border-r-[#8a8a8a] border-b-[#8a8a8a] flex items-center justify-center"><svg width="9" height="9" viewBox="0 0 9 9"><path d="M1 1L8 8M8 1L1 8" stroke="#000000" stroke-width="1.4"/></svg></div>
    </div>
  </div>

  <!-- mouse pointer -->
  <svg class="absolute left-[705px] top-[31px]" width="14" height="20" viewBox="0 0 14 20"><path d="M1 1V15L4.5 12L7 18L10 17L7.5 11H12.5Z" fill="white" stroke="#111111"/></svg>
</div>
</body>
</html>
